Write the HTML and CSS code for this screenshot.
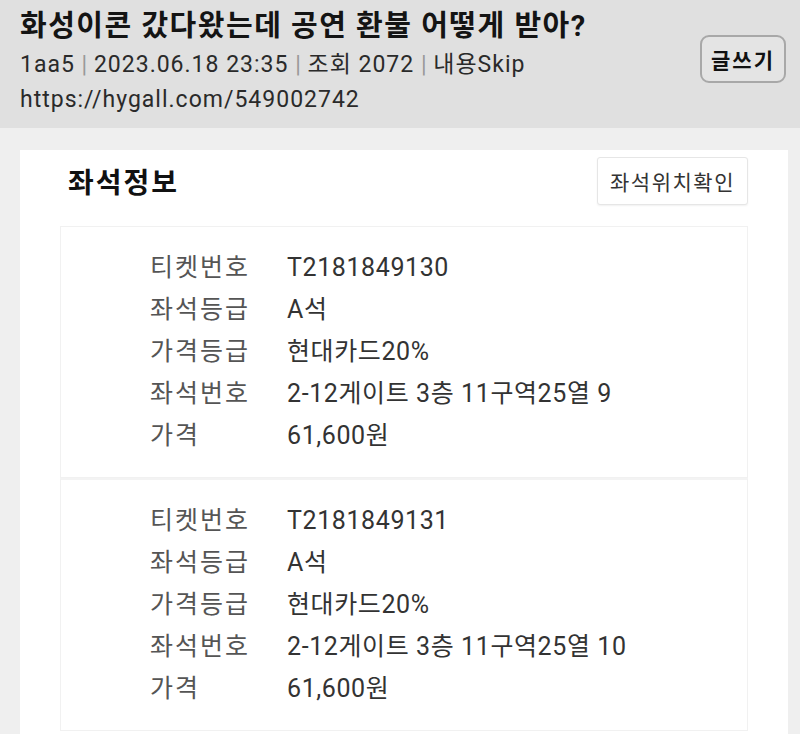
FILE: index.html
```html
<!DOCTYPE html>
<html>
  <head>
    <meta charset="utf-8">
    <title>화성이콘 갔다왔는데 공연 환불 어떻게 받아?</title>
    <link rel="stylesheet" href="styles.css">
  </head>
  <body>
    <header class="post-head">
      <div class="post-info">
        <h1 class="post-title">화성이콘 갔다왔는데 공연 환불 어떻게 받아?</h1>
        <div class="post-meta">1aa5 <span class="sep">|</span> 2023.06.18 23:35 <span class="sep">|</span> 조회 2072 <span class="sep">|</span> 내용Skip</div>
        <div class="post-url">https://hygall.com/549002742</div>
      </div>
      <button class="write-btn">글쓰기</button>
    </header>

    <main class="page">
      <section class="card">
        <div class="card-head">
          <h2 class="card-title">좌석정보</h2>
          <button class="seat-btn">좌석위치확인</button>
        </div>

        <div class="ticket">
          <div class="row"><span class="label">티켓번호</span><span class="value">T2181849130</span></div>
          <div class="row"><span class="label">좌석등급</span><span class="value">A석</span></div>
          <div class="row"><span class="label">가격등급</span><span class="value">현대카드20%</span></div>
          <div class="row"><span class="label">좌석번호</span><span class="value">2-12게이트 3층 11구역25열 9</span></div>
          <div class="row"><span class="label">가격</span><span class="value">61,600원</span></div>
        </div>

        <div class="ticket">
          <div class="row"><span class="label">티켓번호</span><span class="value">T2181849131</span></div>
          <div class="row"><span class="label">좌석등급</span><span class="value">A석</span></div>
          <div class="row"><span class="label">가격등급</span><span class="value">현대카드20%</span></div>
          <div class="row"><span class="label">좌석번호</span><span class="value">2-12게이트 3층 11구역25열 10</span></div>
          <div class="row"><span class="label">가격</span><span class="value">61,600원</span></div>
        </div>
      </section>
    </main>
  </body>
</html>
```

FILE: styles.css
```css
html, body { margin: 0; height: 100%; }
body {
  font-family: Roboto, "Noto Sans CJK KR", sans-serif;
  background: #efefef;
  color: #333;
  overflow: hidden;
}

/* post header */
.post-head {
  display: flex;
  justify-content: space-between;
  align-items: flex-start;
  height: 128px;
  box-sizing: border-box;
  padding: 7px 14px 0 20px;
  background: #e0e0e0;
}
.post-title {
  margin: 0;
  font-size: 29px;
  line-height: 38px;
  letter-spacing: 1.5px;
  font-weight: 700;
  color: #141414;
}
.post-meta, .post-url {
  font-size: 23px;
  line-height: 35px;
  letter-spacing: 1px;
  color: #2a2a2a;
}
.post-meta { margin-top: 2px; }
.post-meta .sep { color: #999; letter-spacing: 0; }
.write-btn {
  margin-top: 28px;
  width: 86px;
  height: 48px;
  border: 2px solid #a8a8a8;
  border-radius: 9px;
  background: #e4e4e4;
  font-family: inherit;
  font-size: 21px;
  font-weight: 700;
  letter-spacing: 2px;
  color: #111;
}

/* seat info card */
.page { padding: 22px 12px 0 20px; }
.card {
  background: #fff;
  padding: 7px 40px 0 40px;
  min-height: 600px;
}
.card-head {
  display: flex;
  justify-content: space-between;
  align-items: center;
  margin-bottom: 21px;
}
.card-title {
  margin: 0 0 0 8px;
  font-size: 28px;
  letter-spacing: 2px;
  font-weight: 700;
  color: #111;
}
.seat-btn {
  width: 151px;
  height: 48px;
  border: 1px solid #e6e6e6;
  border-radius: 3px;
  background: #fff;
  box-shadow: 0 1px 2px rgba(0, 0, 0, 0.06);
  font-family: inherit;
  font-size: 21px;
  letter-spacing: 1.5px;
  color: #333;
}

.ticket {
  border: 1px solid #f1f1f1;
  padding: 20px 0 20px 89px;
}
.ticket + .ticket { border-top: 2px solid #f3f3f3; }
.row {
  display: flex;
  font-size: 25px;
  line-height: 42px;
}
.label { width: 137px; color: #555; letter-spacing: 2px; }
.value { color: #333; letter-spacing: 0.6px; }
```
